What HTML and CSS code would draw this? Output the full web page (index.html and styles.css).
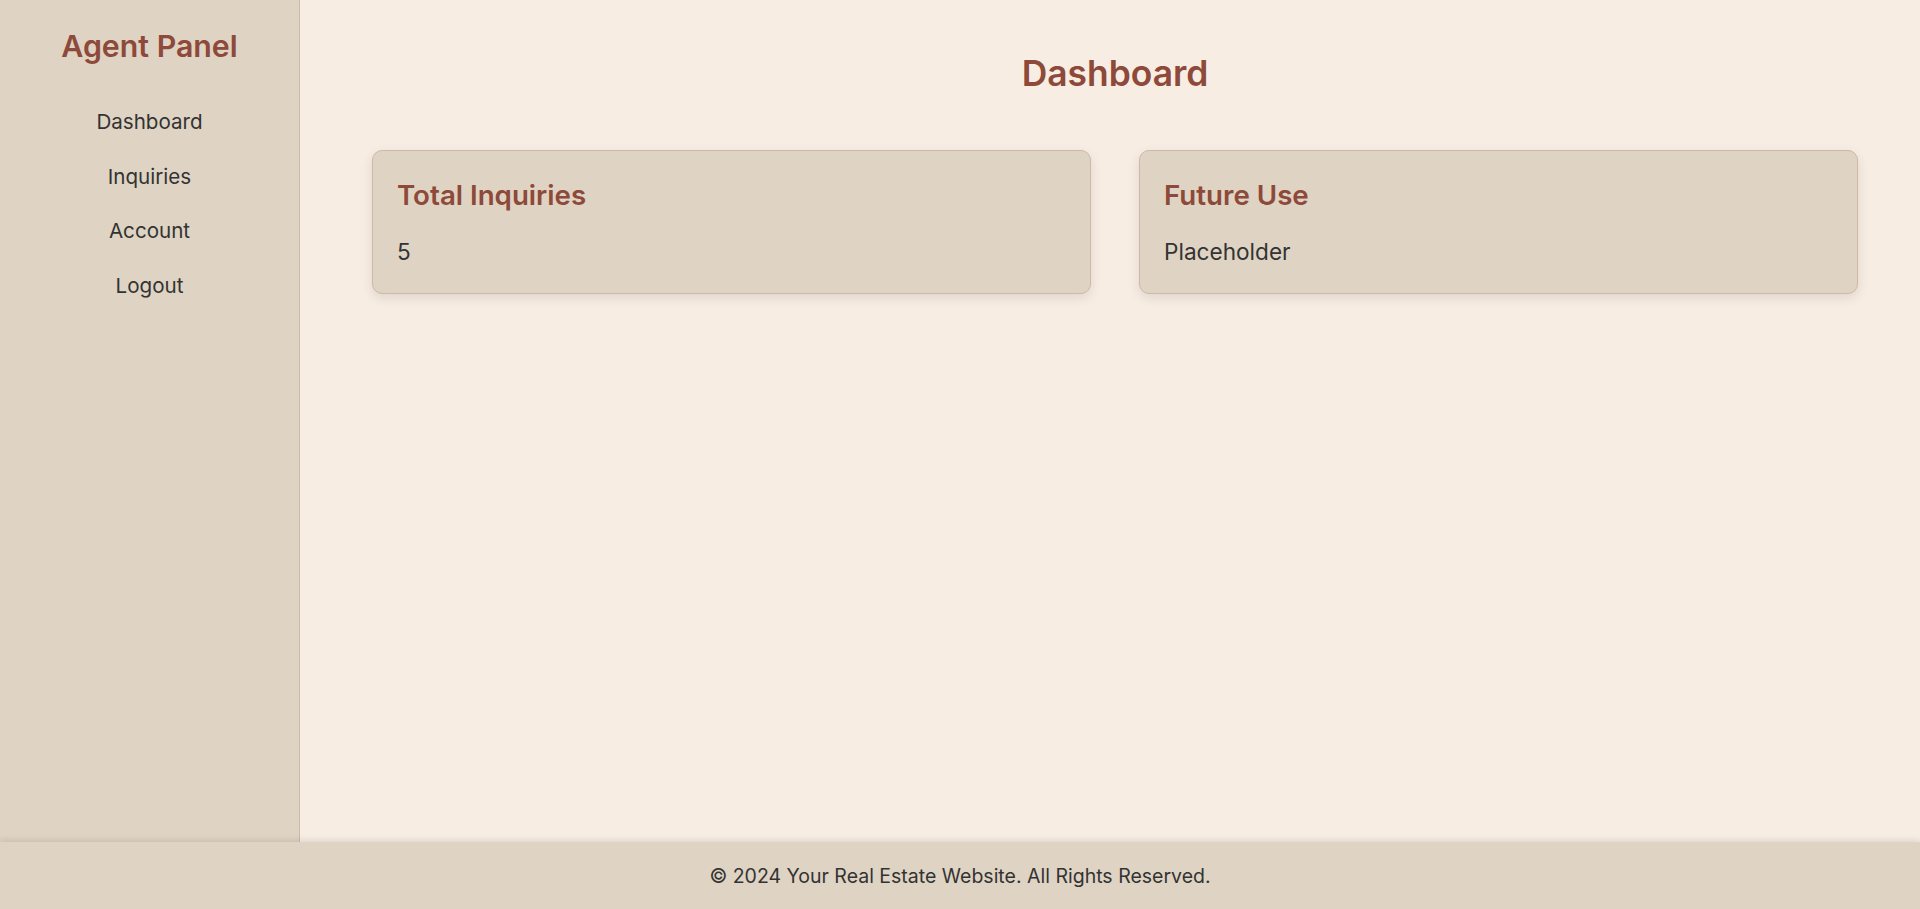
FILE: index.html
```html
<!DOCTYPE html>
<html lang="en">
<head>
<meta charset="UTF-8">
<title>Agent Panel - Dashboard</title>
<link rel="stylesheet" href="styles.css">
</head>
<body>
<div class="layout">
  <aside class="sidebar">
    <h2 class="brand">Agent Panel</h2>
    <nav class="nav">
      <a class="nav-link" href="#">Dashboard</a>
      <a class="nav-link" href="#">Inquiries</a>
      <a class="nav-link" href="#">Account</a>
      <a class="nav-link" href="#">Logout</a>
    </nav>
  </aside>
  <main class="main">
    <h1 class="page-title">Dashboard</h1>
    <div class="cards">
      <section class="card">
        <h3 class="card-title">Total Inquiries</h3>
        <p class="card-text">5</p>
      </section>
      <section class="card">
        <h3 class="card-title">Future Use</h3>
        <p class="card-text">Placeholder</p>
      </section>
    </div>
  </main>
</div>
<footer class="footer">
  <p class="footer-text">&copy; 2024 Your Real Estate Website. All Rights Reserved.</p>
</footer>
</body>
</html>
```
FILE: styles.css
```css
* { box-sizing: border-box; }
html, body { height: 100%; }
body {
  margin: 0;
  font-family: "Inter", "Noto Sans", sans-serif;
  color: #333;
  background: #F8EDE3;
  display: flex;
  flex-direction: column;
}
.layout {
  flex: 1;
  display: flex;
  min-height: 0;
}
.sidebar {
  width: 300px;
  flex: none;
  background: #DFD3C3;
  border-right: 1px solid #D0B8A8;
  padding-top: 28px;
  text-align: center;
}
.brand {
  margin: 0;
  font-size: 30.3px;
  line-height: 36px;
  font-weight: 600;
  color: #8D493A;
}
.nav {
  display: flex;
  flex-direction: column;
  margin-top: 44px;
  gap: 27.5px;
}
.nav-link {
  color: #333;
  text-decoration: none;
  font-size: 20.6px;
  line-height: 27px;
}
.main {
  flex: 1;
  padding: 53px 62px 0 72px;
}
.page-title {
  margin: 0;
  text-align: center;
  font-size: 35.4px;
  line-height: 42px;
  font-weight: 600;
  color: #8D493A;
}
.cards {
  margin-top: 55px;
  display: grid;
  grid-template-columns: 1fr 1fr;
  gap: 48px;
}
.card {
  background: #DFD3C3;
  border: 1px solid #D0B8A8;
  border-radius: 10px;
  box-shadow: 0 4px 12px rgba(0,0,0,0.1);
  padding: 27px 24px 26px;
}
.card-title {
  margin: 0;
  font-size: 27.7px;
  line-height: 34px;
  font-weight: 600;
  color: #8D493A;
}
.card-text {
  margin: 25px 0 0;
  font-size: 22.6px;
  line-height: 30px;
}
.footer {
  flex: none;
  height: 67px;
  background: #DFD3C3;
  box-shadow: 0 -2px 6px rgba(0,0,0,0.1);
  display: flex;
  align-items: center;
  justify-content: center;
  position: relative;
}
.footer-text {
  margin: 0;
  font-size: 19.5px;
}
```
